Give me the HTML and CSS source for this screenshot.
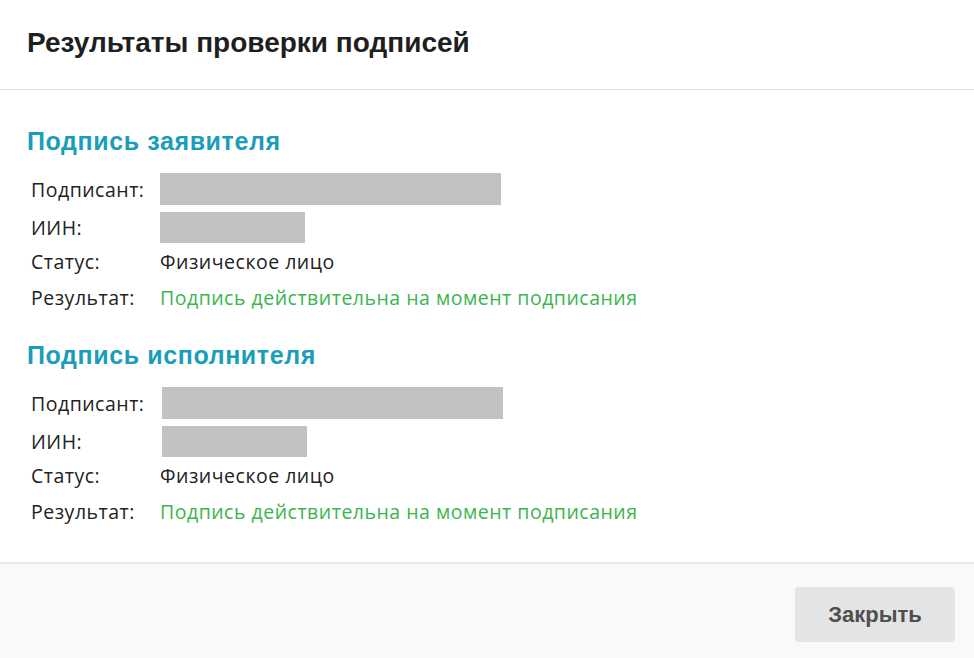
FILE: index.html
```html
<!DOCTYPE html>
<html lang="ru">
<head>
<meta charset="utf-8">
<link rel="stylesheet" href="styles.css">
</head>
<body>
<div class="modal">
  <header class="modal-header">
    <h1 class="modal-title">Результаты проверки подписей</h1>
  </header>
  <main class="modal-body">
    <section class="sig">
      <h2 class="sig-title">Подпись заявителя</h2>
      <div class="fields">
        <div class="label">Подписант:</div>
        <div class="value"><span class="mask mask-wide"></span></div>
        <div class="label row-iin">ИИН:</div>
        <div class="value row-iin"><span class="mask mask-short"></span></div>
        <div class="label row-text">Статус:</div>
        <div class="value row-text">Физическое лицо</div>
        <div class="label row-text">Результат:</div>
        <div class="value row-text ok">Подпись действительна на момент подписания</div>
      </div>
    </section>
    <section class="sig sig-second">
      <h2 class="sig-title">Подпись исполнителя</h2>
      <div class="fields">
        <div class="label">Подписант:</div>
        <div class="value shifted"><span class="mask mask-wide"></span></div>
        <div class="label row-iin">ИИН:</div>
        <div class="value row-iin shifted"><span class="mask mask-short"></span></div>
        <div class="label row-text">Статус:</div>
        <div class="value row-text">Физическое лицо</div>
        <div class="label row-text">Результат:</div>
        <div class="value row-text ok">Подпись действительна на момент подписания</div>
      </div>
    </section>
  </main>
  <footer class="modal-footer">
    <button class="btn-close" type="button">Закрыть</button>
  </footer>
</div>
</body>
</html>
```

FILE: styles.css
```css
* { box-sizing: border-box; }
html, body { margin: 0; padding: 0; background: #fff; }
body { width: 974px; height: 658px; overflow: hidden; }

.modal {
  display: flex;
  flex-direction: column;
  height: 658px;
  font-family: "Open Sans", "Noto Sans", sans-serif;
  color: #222;
}

.modal-header {
  height: 90px;
  border-bottom: 1px solid #e3e3e3;
  padding: 0 27px;
  display: flex;
  align-items: center;
}
.modal-title {
  margin: 0;
  font-family: "Liberation Sans", Arial, sans-serif;
  font-weight: bold;
  font-size: 28px;
  color: #1f1f1f;
  line-height: 32px;
  padding-bottom: 3px;
}

.modal-body {
  flex: 1;
  padding: 36px 27px 0 27px;
}

.sig-second { margin-top: 25px; }

.sig-title {
  margin: 0 0 17px 0;
  font-family: "Liberation Sans", Arial, sans-serif;
  font-weight: bold;
  font-size: 25px;
  letter-spacing: 0.6px;
  line-height: 30px;
  color: #1a9db9;
}

.fields {
  display: grid;
  grid-template-columns: 129px 1fr;
  padding-left: 4px;
  font-size: 19.5px;
  letter-spacing: 0.5px;
}

.label, .value {
  display: flex;
  align-items: center;
  height: 32px;
  white-space: nowrap;
}
.row-iin { margin-top: 7px; height: 31px; }
.row-text { height: 35px; margin-top: 1px; }

.shifted { padding-left: 2px; }

.mask {
  display: block;
  height: 100%;
  background: #c2c2c2;
}
.mask-wide { width: 341px; }
.mask-short { width: 145px; }

.ok { color: #3bb54e; }

.modal-footer {
  height: 96px;
  border-top: 2px solid #e6e6e8;
  background: #f8f9fb;
  display: flex;
  justify-content: flex-end;
  align-items: flex-start;
  padding: 23px 19px 0 0;
}
.btn-close {
  width: 160px;
  height: 55px;
  border: none;
  border-radius: 4px;
  background: #e3e4e6;
  color: #4f4f4f;
  font-family: "Liberation Sans", Arial, sans-serif;
  font-weight: bold;
  font-size: 22px;
  cursor: pointer;
}
```
